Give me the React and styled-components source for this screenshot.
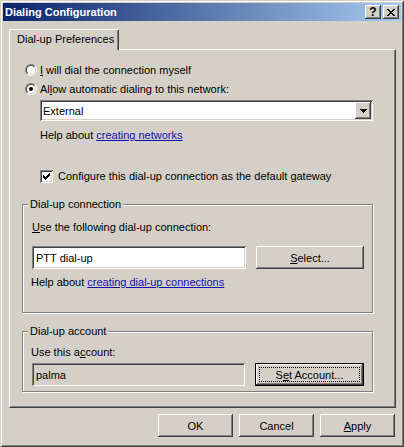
import React from 'react';
import styled, { createGlobalStyle } from 'styled-components';

const GlobalStyle = createGlobalStyle`
  html, body {
    margin: 0;
    padding: 0;
    background: #d4d0c8;
  }

  body {
    font-family: "Liberation Sans", Arial, sans-serif;
    font-size: 11px;
    color: #000;
  }
`;

const raised = `
  box-shadow: inset -1px -1px #404040, inset 1px 1px #fff, inset -2px -2px #808080;
`;

const sunken = `
  box-shadow: inset 1px 1px #808080, inset -1px -1px #fff, inset 2px 2px #404040, inset -2px -2px #d4d0c8;
`;

const Window = styled.div`
  width: 404px;
  height: 447px;
  box-sizing: border-box;
  padding: 3px;
  background: #d4d0c8;
  box-shadow: inset 1px 1px #d4d0c8, inset -1px -1px #404040, inset 2px 2px #fff, inset -2px -2px #808080;
  display: flex;
  flex-direction: column;
`;

const TitleBar = styled.div`
  height: 18px;
  display: flex;
  align-items: center;
  padding: 0 2px;
  background: linear-gradient(to right, #0a246a, #a6caf0);
  color: #fff;
  font-weight: bold;
`;

const Title = styled.span`
  flex: 1;
`;

const CaptionButtons = styled.div`
  display: flex;
  gap: 2px;
`;

const CaptionButton = styled.div`
  width: 16px;
  height: 14px;
  box-sizing: border-box;
  background: #d4d0c8;
  ${raised}
  display: flex;
  align-items: center;
  justify-content: center;
  color: #000;
  font-size: 12px;
  font-weight: bold;
  line-height: 14px;
`;

const Body = styled.div`
  padding: 8px 5px 0 6px;
  display: flex;
  flex-direction: column;
`;

const TabStrip = styled.div`
  display: flex;
`;

const Tab = styled.div`
  width: 110px;
  height: 21px;
  box-sizing: border-box;
  padding-left: 7px;
  line-height: 19px;
  border-top: 1px solid #fff;
  border-left: 1px solid #fff;
  border-right: 1px solid #404040;
  border-radius: 2px 2px 0 0;
  box-shadow: inset -1px 0 #808080;
  background: #d4d0c8;
  margin-bottom: -1px;
  position: relative;
  z-index: 1;
`;

const Panel = styled.div`
  border-top: 1px solid #fff;
  border-left: 1px solid #fff;
  border-right: 1px solid #404040;
  border-bottom: 1px solid #404040;
  box-shadow: inset -1px -1px #808080;
  padding: 10px 22px 15px 12px;
  display: flex;
  flex-direction: column;
`;

const OptionRow = styled.div`
  display: flex;
  align-items: center;
  height: 19px;
  margin-left: 3px;
  gap: 3px;
`;

const Radio = styled.span`
  width: 12px;
  height: 12px;
  box-sizing: border-box;
  border-radius: 50%;
  border: 1px solid;
  border-color: #808080 #fff #fff #808080;
  display: flex;
`;

const RadioInner = styled.span`
  flex: 1;
  border-radius: 50%;
  border: 1px solid;
  border-color: #404040 #d4d0c8 #d4d0c8 #404040;
  background: #fff;
  display: flex;
  align-items: center;
  justify-content: center;

  &::after {
    content: '';
    width: 4px;
    height: 4px;
    border-radius: 50%;
    background: ${props => (props.$checked ? '#000' : 'transparent')};
  }
`;

const Indent = styled.div`
  margin-left: 18px;
  display: flex;
  flex-direction: column;
`;

const Combo = styled.div`
  margin-top: 2px;
  height: 21px;
  box-sizing: border-box;
  padding: 2px;
  background: #fff;
  ${sunken}
  display: flex;
  align-items: center;
`;

const ComboText = styled.span`
  flex: 1;
  padding-left: 1px;
`;

const ComboButton = styled.div`
  width: 16px;
  height: 17px;
  background: #d4d0c8;
  ${raised}
  display: flex;
  align-items: center;
  justify-content: center;
`;

const TextLine = styled.div`
  margin-top: ${props => props.$top || 0}px;
  margin-left: ${props => props.$left || 0}px;
  line-height: 14px;
  height: 14px;
  white-space: nowrap;
`;

const Link = styled.span`
  color: #1010b0;
  text-decoration: underline;
`;

const Key = styled.span`
  text-decoration: underline;
`;

const CheckRow = styled.div`
  margin-top: 27px;
  height: 14px;
  display: flex;
  align-items: center;
  gap: 5px;
`;

const CheckBox = styled.span`
  width: 13px;
  height: 13px;
  box-sizing: border-box;
  background: #fff;
  ${sunken}
  display: flex;
  align-items: center;
  justify-content: center;
`;

const Group = styled.div`
  margin-top: ${props => props.$top}px;
  border: 1px solid #808080;
  box-shadow: inset 1px 1px #fff, 1px 1px #fff;
  padding: 0 8px ${props => props.$bottom}px 9px;
  display: flex;
  flex-direction: column;
`;

const GroupTitle = styled.span`
  align-self: flex-start;
  margin: -7px 0 0 -4px;
  padding: 0 2px;
  height: 13px;
  line-height: 13px;
  background: #d4d0c8;
`;

const FieldRow = styled.div`
  margin-top: ${props => props.$top}px;
  display: flex;
  gap: 10px;
  height: 23px;
`;

const Field = styled.div`
  width: ${props => props.$width}px;
  box-sizing: border-box;
  padding: 0 4px;
  background: ${props => (props.$disabled ? '#d4d0c8' : '#fff')};
  ${sunken}
  display: flex;
  align-items: center;
`;

const Button = styled.div`
  width: ${props => props.$width || 75}px;
  height: 23px;
  box-sizing: border-box;
  background: #d4d0c8;
  ${raised}
  display: flex;
  align-items: center;
  justify-content: center;
`;

const DefaultButton = styled(Button)`
  border: 1px solid #000;
  padding: 3px;
`;

const FocusRect = styled.span`
  flex: 1;
  align-self: stretch;
  border: 1px dotted #000;
  display: flex;
  align-items: center;
  justify-content: center;
`;

const ButtonBar = styled.div`
  margin-top: 6px;
  padding-right: 1px;
  display: flex;
  justify-content: flex-end;
  gap: 6px;
`;

const CloseGlyph = () => (
  <svg width="8" height="7" viewBox="0 0 8 7" shapeRendering="crispEdges">
    <path
      fill="#000"
      d="M0 0h2v1H0zM6 0h2v1H6zM1 1h2v1H1zM5 1h2v1H5zM2 2h4v1H2zM3 3h2v1H3zM2 4h4v1H2zM1 5h2v1H1zM5 5h2v1H5zM0 6h2v1H0zM6 6h2v1H6z"
    />
  </svg>
);

const ArrowGlyph = () => (
  <svg width="7" height="4" viewBox="0 0 7 4" shapeRendering="crispEdges">
    <path fill="#000" d="M0 0h7v1H0zM1 1h5v1H1zM2 2h3v1H2zM3 3h1v1H3z" />
  </svg>
);

const CheckGlyph = () => (
  <svg width="7" height="7" viewBox="0 0 7 7" shapeRendering="crispEdges">
    <path
      fill="#000"
      d="M6 0h1v3H6zM5 1h1v3H5zM4 2h1v3H4zM3 3h1v3H3zM2 4h1v3H2zM1 3h1v3H1zM0 2h1v3H0z"
    />
  </svg>
);

const App = () => (
  <>
    <GlobalStyle />
    <Window>
      <TitleBar>
        <Title>Dialing Configuration</Title>
        <CaptionButtons>
          <CaptionButton>?</CaptionButton>
          <CaptionButton><CloseGlyph /></CaptionButton>
        </CaptionButtons>
      </TitleBar>
      <Body>
        <TabStrip>
          <Tab>Dial-up Preferences</Tab>
        </TabStrip>
        <Panel>
          <OptionRow>
            <Radio><RadioInner /></Radio>
            <span><Key>I</Key> will dial the connection myself</span>
          </OptionRow>
          <OptionRow>
            <Radio><RadioInner $checked /></Radio>
            <span>Al<Key>l</Key>ow automatic dialing to this network:</span>
          </OptionRow>
          <Indent>
            <Combo>
              <ComboText>External</ComboText>
              <ComboButton><ArrowGlyph /></ComboButton>
            </Combo>
            <TextLine $top={7}>Help about <Link>creating networks</Link></TextLine>
            <CheckRow>
              <CheckBox><CheckGlyph /></CheckBox>
              <span>Configure this dial-up connection as the default <Key>g</Key>ateway</span>
            </CheckRow>
          </Indent>
          <Group $top={21} $bottom={23}>
            <GroupTitle>Dial-up connection</GroupTitle>
            <TextLine $top={9}><Key>U</Key>se the following dial-up connection:</TextLine>
            <FieldRow $top={12}>
              <Field $width={214}>PTT dial-up</Field>
              <Button $width={108}><span><Key>S</Key>elect...</span></Button>
            </FieldRow>
            <TextLine $top={6} $left={-1}>Help about <Link>creating dial-up connections</Link></TextLine>
          </Group>
          <Group $top={18} $bottom={5}>
            <GroupTitle>Dial-up account</GroupTitle>
            <TextLine $top={7} $left={-1}>Use this a<Key>c</Key>count:</TextLine>
            <FieldRow $top={4}>
              <Field $width={215} $disabled>palma</Field>
              <DefaultButton $width={110}>
                <FocusRect>S<Key>e</Key>t Account...</FocusRect>
              </DefaultButton>
            </FieldRow>
          </Group>
        </Panel>
        <ButtonBar>
          <Button>OK</Button>
          <Button>Cancel</Button>
          <Button><span><Key>A</Key>pply</span></Button>
        </ButtonBar>
      </Body>
    </Window>
  </>
);

export default App;
